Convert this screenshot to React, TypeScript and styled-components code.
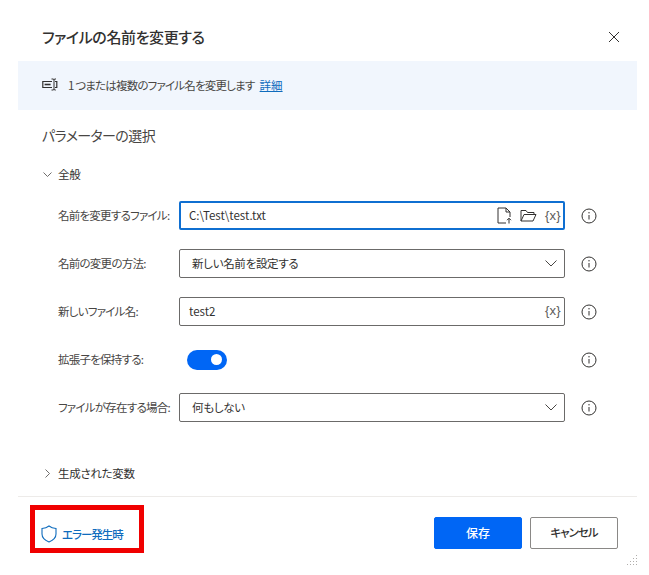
import React from "react";
import styled, { createGlobalStyle } from "styled-components";

const FONT = `"Noto Sans CJK JP", "Noto Sans", sans-serif`;

const GlobalStyle = createGlobalStyle`
  html, body {
    margin: 0;
    padding: 0;
    background: #fff;
  }
  body {
    font-family: ${FONT};
    font-feature-settings: "palt";
    color: #323130;
  }
`;

const Dialog = styled.div`
  position: relative;
  width: 649px;
  height: 575px;
  overflow: hidden;
  background: #fff;
  display: flex;
  flex-direction: column;
  padding: 0 12px 0 18px;
  box-sizing: border-box;
`;

const Header = styled.div`
  height: 61px;
  display: flex;
  align-items: center;
  justify-content: space-between;
  padding: 13px 17px 0 24px;
  box-sizing: border-box;
`;

const Title = styled.h1`
  margin: 0;
  font-size: 15px;
  font-weight: 500;
  line-height: 24px;
  letter-spacing: -0.4px;
  color: #323130;
`;

const IconButton = styled.span`
  display: flex;
  align-items: center;
  justify-content: center;
`;

const Banner = styled.div`
  height: 49px;
  box-sizing: border-box;
  background: #f1f6fd;
  display: flex;
  align-items: center;
  padding: 0 0 2px 24px;
  font-size: 11.5px;
  color: #484644;
`;

const BannerText = styled.span`
  margin-left: 10px;
  letter-spacing: -0.8px;
`;

const DetailLink = styled.a`
  margin-left: 5px;
  color: #0f6cbd;
  text-decoration: underline;
`;

const SectionTitle = styled.h2`
  margin: 13px 0 0 24px;
  font-size: 14px;
  font-weight: 400;
  line-height: 24px;
  letter-spacing: -0.6px;
  color: #484644;
`;

const GroupHeader = styled.div<{ $top: number }>`
  display: flex;
  align-items: center;
  gap: 6px;
  margin: ${(p) => p.$top}px 0 0 25px;
  font-size: 11.5px;
  line-height: 18px;
  letter-spacing: -0.3px;
  color: #323130;
`;

const Rows = styled.div`
  display: flex;
  flex-direction: column;
  gap: 19px;
  margin: 18px 0 0 40px;
`;

const Row = styled.div`
  display: grid;
  grid-template-columns: 121px 386px 32px;
  align-items: center;
  height: 29px;
`;

const Label = styled.label`
  font-size: 11.5px;
  letter-spacing: -0.75px;
  color: #484644;
  white-space: nowrap;
  padding-bottom: 2px;
`;

const Field = styled.div<{ $focused?: boolean }>`
  height: 29px;
  box-sizing: border-box;
  display: flex;
  align-items: center;
  justify-content: space-between;
  border-radius: 2px;
  border: ${(p) => (p.$focused ? "2px solid #0f6fd1" : "1px solid #6b6a69")};
  padding: 0 ${(p) => (p.$focused ? 2 : 3)}px 2px ${(p) => (p.$focused ? 8 : 9)}px;
  font-size: 11.5px;
  color: #323130;
  background: #fff;
`;

const SelectText = styled.span`
  padding-left: 3px;
  letter-spacing: -0.3px;
`;

const SelectArrow = styled.span`
  display: flex;
  padding: 2px 4px 0 0;
`;

const FieldIcons = styled.span`
  display: flex;
  align-items: center;
  gap: 8px;
  padding-top: 2px;
`;

const VarToken = styled.span`
  font-family: "Liberation Sans", sans-serif;
  font-size: 13px;
  letter-spacing: 0.3px;
  color: #5c5b5a;
`;

const InfoCell = styled.span`
  display: flex;
  justify-content: flex-end;
`;

const ToggleCell = styled.div`
  padding-left: 8px;
  display: flex;
`;

const Toggle = styled.span`
  width: 40px;
  height: 20px;
  border-radius: 10px;
  background: #0066f5;
  display: flex;
  align-items: center;
  justify-content: flex-end;
  padding-right: 5px;
  box-sizing: border-box;
`;

const ToggleKnob = styled.span`
  width: 11px;
  height: 11px;
  border-radius: 50%;
  background: #fff;
`;

const Footer = styled.div`
  margin-top: 14px;
  border-top: 1px solid #edebe9;
  display: flex;
  justify-content: space-between;
  padding: 8px 19px 0 12px;
  height: 60px;
  box-sizing: border-box;
`;

const ErrorLink = styled.a`
  width: 114px;
  height: 48px;
  box-sizing: border-box;
  border: 5px solid #f00000;
  display: flex;
  align-items: center;
  gap: 5px;
  padding: 9px 0 0 6px;
  font-size: 11.5px;
  font-weight: 500;
  letter-spacing: -1px;
  color: #0f6cbd;
`;

const Actions = styled.div`
  display: flex;
  gap: 8px;
  padding-top: 12px;
`;

const Button = styled.button<{ $primary?: boolean }>`
  width: 88px;
  height: 32px;
  box-sizing: border-box;
  border-radius: 2px;
  font-family: ${FONT};
  font-feature-settings: "palt";
  font-size: ${(p) => (p.$primary ? 12 : 11.5)}px;
  letter-spacing: ${(p) => (p.$primary ? 0 : -1)}px;
  font-weight: 500;
  padding: 0 0 2px;
  border: 1px solid ${(p) => (p.$primary ? "#0066f5" : "#8a8886")};
  background: ${(p) => (p.$primary ? "#0066f5" : "#fff")};
  color: ${(p) => (p.$primary ? "#fff" : "#323130")};
`;

const Grip = styled.svg`
  position: absolute;
  right: 11px;
  bottom: 9px;
`;

const CloseIcon = () => (
  <svg width="12" height="12" viewBox="0 0 12 12" fill="none" stroke="#323130" strokeWidth="1">
    <path d="M1 1l10 10M11 1L1 11" />
  </svg>
);

const RenameIcon = () => (
  <svg width="16" height="14" viewBox="0 0 16 14" fill="none" stroke="#323130" strokeWidth="1.2">
    <path d="M10 3.500H.8v6H10M13 3.500h1.800v6H13" />
    <path d="M2.600 6.500h6" strokeWidth="1.600" />
    <path d="M9.500 1h1.500a1 1 0 0 1 1 1v9a1 1 0 0 0 1 1h.8M14 1h-1a1 1 0 0 0-1 1M12 11a1 1 0 0 1-1 1H9.500" strokeWidth="1" />
  </svg>
);

const Chevron = ({ open }: { open: boolean }) => (
  <svg width="9" height="9" viewBox="0 0 9 9" fill="none" stroke="#605e5c" strokeWidth="0.9">
    <path d={open ? "M.5 2.500l4 4 4-4" : "M2.500.5l4 4-4 4"} />
  </svg>
);

const SelectChevron = () => (
  <SelectArrow>
    <svg width="12" height="7" viewBox="0 0 12 7" fill="none" stroke="#484644" strokeWidth="1">
      <path d="M.5.5L6 6l5.500-5.500" />
    </svg>
  </SelectArrow>
);

const InfoIcon = () => (
  <svg width="16" height="16" viewBox="0 0 16 16" fill="none" stroke="#323130" strokeWidth="1">
    <circle cx="8" cy="8" r="7" />
    <path d="M8 7v4.500" />
    <circle cx="8" cy="4.800" r="0.7" fill="#323130" stroke="none" />
  </svg>
);

const NewFileIcon = () => (
  <svg width="15" height="17" viewBox="0 0 15 17" fill="none" stroke="#323130" strokeWidth="1">
    <path d="M9 16H1V1h8l4 4v5M9 1v4h4" />
    <path d="M12 16.500v-5M10 13.200l2-2 2 2" />
  </svg>
);

const FolderIcon = () => (
  <svg width="17" height="13" viewBox="0 0 17 13" fill="none" stroke="#323130" strokeWidth="1">
    <path d="M1 12V1.500h5l1.500 2H14v2M1 12h12l3-6.500H4L1 12z" />
  </svg>
);

const ShieldIcon = () => (
  <svg width="16" height="18" viewBox="0 0 16 18" fill="none" stroke="#0f6cbd" strokeWidth="1.1">
    <path d="M8 1c2 1.600 4 2.300 7 2.500V9c0 3.600-2.600 6.200-7 8-4.400-1.800-7-4.400-7-8V3.500C4 3.300 6 2.600 8 1z" />
  </svg>
);

const Info = () => (
  <InfoCell>
    <InfoIcon />
  </InfoCell>
);

const gripDots = [
  [9, 0], [9, 3], [6, 3], [9, 6], [6, 6], [3, 6], [9, 9], [6, 9], [3, 9], [0, 9],
];

export default function App() {
  return (
    <Dialog>
      <GlobalStyle />
      <Header>
        <Title>ファイルの名前を変更する</Title>
        <IconButton>
          <CloseIcon />
        </IconButton>
      </Header>
      <Banner>
        <RenameIcon />
        <BannerText>1 つまたは複数のファイル名を変更します</BannerText>
        <DetailLink href="#">詳細</DetailLink>
      </Banner>
      <SectionTitle>パラメーターの選択</SectionTitle>
      <GroupHeader $top={18}>
        <Chevron open />
        全般
      </GroupHeader>
      <Rows>
        <Row>
          <Label>名前を変更するファイル:</Label>
          <Field $focused>
            C:\Test\test.txt
            <FieldIcons>
              <NewFileIcon />
              <FolderIcon />
              <VarToken>{"{x}"}</VarToken>
            </FieldIcons>
          </Field>
          <Info />
        </Row>
        <Row>
          <Label>名前の変更の方法:</Label>
          <Field>
            <SelectText>新しい名前を設定する</SelectText>
            <SelectChevron />
          </Field>
          <Info />
        </Row>
        <Row>
          <Label>新しいファイル名:</Label>
          <Field>
            test2
            <VarToken>{"{x}"}</VarToken>
          </Field>
          <Info />
        </Row>
        <Row>
          <Label>拡張子を保持する:</Label>
          <ToggleCell>
            <Toggle>
              <ToggleKnob />
            </Toggle>
          </ToggleCell>
          <Info />
        </Row>
        <Row>
          <Label>ファイルが存在する場合:</Label>
          <Field>
            <SelectText>何もしない</SelectText>
            <SelectChevron />
          </Field>
          <Info />
        </Row>
      </Rows>
      <GroupHeader $top={42}>
        <Chevron open={false} />
        生成された変数
      </GroupHeader>
      <Footer>
        <ErrorLink>
          <ShieldIcon />
          エラー発生時
        </ErrorLink>
        <Actions>
          <Button $primary>保存</Button>
          <Button>キャンセル</Button>
        </Actions>
      </Footer>
      <Grip width="11" height="11" viewBox="0 0 11 11" fill="#b0aeac">
        {gripDots.map(([x, y]) => (
          <rect key={`${x}-${y}`} x={x} y={y} width="1" height="1" />
        ))}
      </Grip>
    </Dialog>
  );
}
